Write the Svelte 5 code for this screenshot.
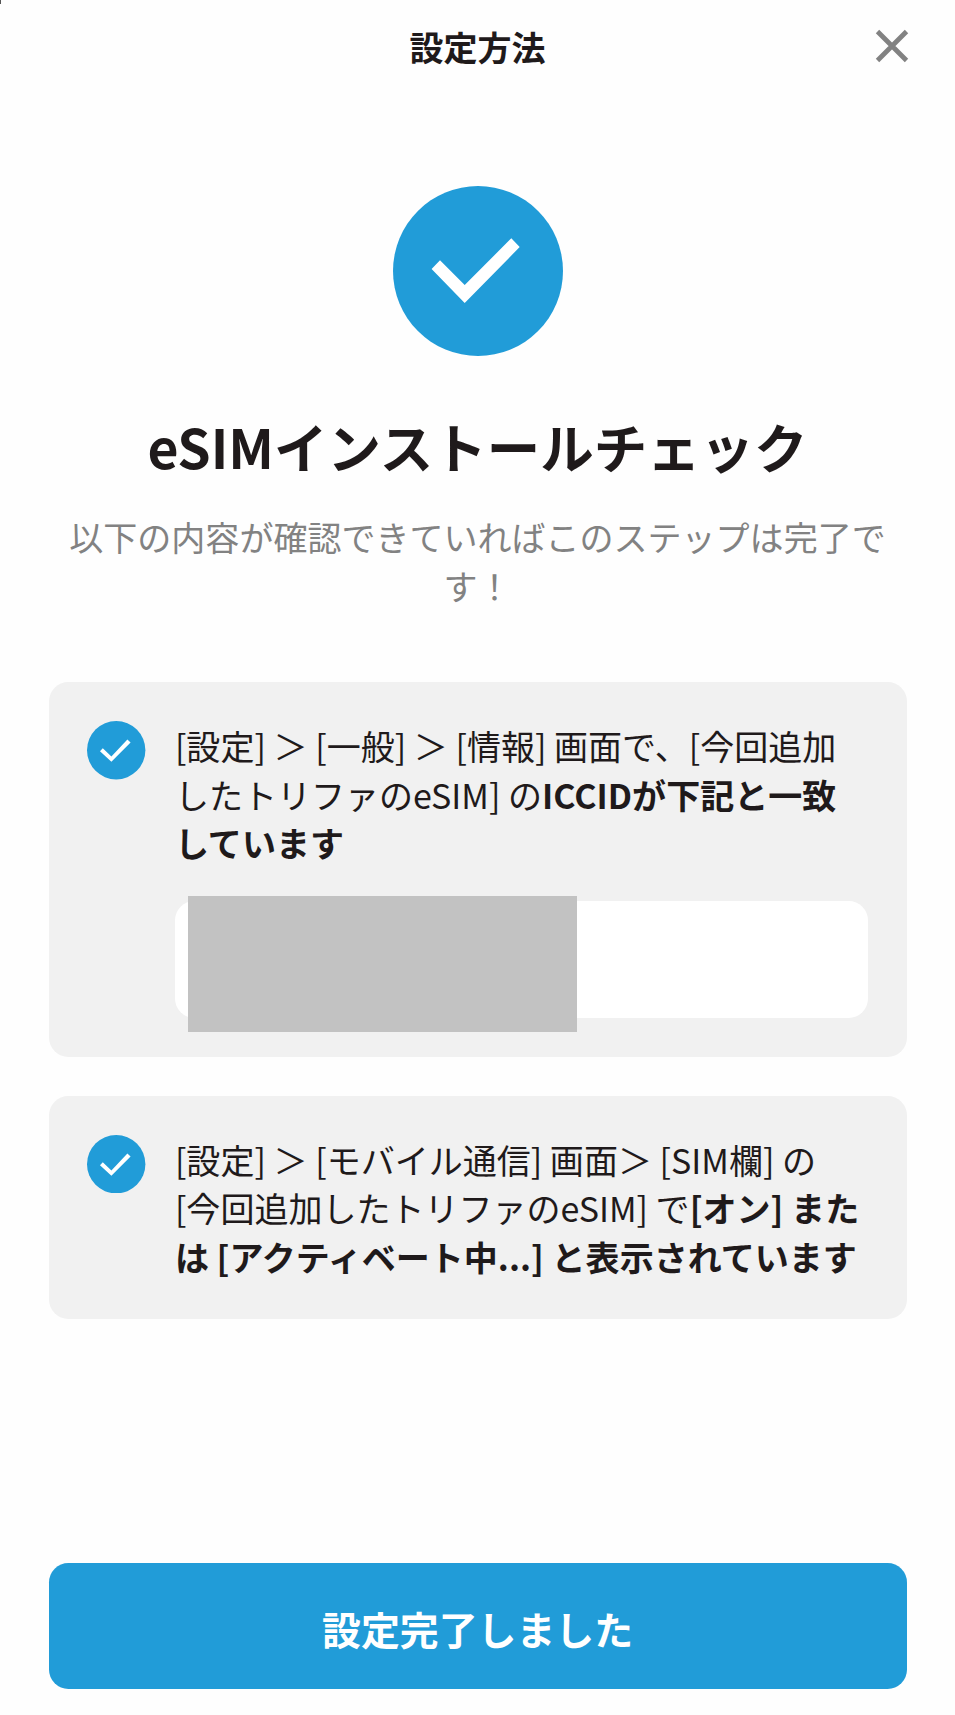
<script>
  const title = '設定方法';
  const heading = 'eSIMインストールチェック';
</script>

{#snippet check()}
  <svg class="check" viewBox="0 0 58.4 58.4" aria-hidden="true">
    <circle cx="29.2" cy="29.2" r="29.2" />
    <path d="M13 30.3 15.8 27.2 24.4 35.5 40.4 18.4 43.6 21.4 24.4 40.8z" />
  </svg>
{/snippet}

<div class="screen">
  <header>
    <h2>{title}</h2>
    <button class="close" type="button" aria-label="閉じる">
      <svg viewBox="0 0 34 34" aria-hidden="true">
        <path d="M2.5 2.5 31.5 31.5M31.5 2.5 2.5 31.5" />
      </svg>
    </button>
  </header>

  <main>
    <svg class="hero" viewBox="0 0 170 170" aria-hidden="true">
      <circle cx="85" cy="85" r="85" />
      <path d="M38.6 83 47 74.3 71.7 99 118.3 52.3 126.7 61 71.7 117z" />
    </svg>

    <h1>{heading}</h1>
    <p class="lead">以下の内容が確認できていればこのステップは完了で<br />す！</p>

    <ul>
      <li>
        {@render check()}
        <div class="body">
          <p>
            [設定] ＞ [一般] ＞ [情報] 画面で、[今回追加<br />したトリファのeSIM] の<strong>ICCIDが下記と一致<br />しています</strong>
          </p>
          <div class="iccid"><span class="mask"></span></div>
        </div>
      </li>
      <li>
        {@render check()}
        <div class="body">
          <p>
            [設定] ＞ [モバイル通信] 画面＞ [SIM欄] の<br />[今回追加したトリファのeSIM] で<strong>[オン] また<br />は [アクティベート中...] と表示されています</strong>
          </p>
        </div>
      </li>
    </ul>
  </main>

  <footer>
    <button class="done" type="button">設定完了しました</button>
  </footer>
</div>

<style>
  :global(body) {
    background: #fefefe;
  }

  .screen {
    position: relative;
    box-sizing: border-box;
    width: 955px;
    height: 1715px;
    padding: 0 48.6px 26px;
    display: flex;
    flex-direction: column;
    overflow: hidden;
    background: #fefefe;
    color: #1f1a1b;
    font-family: "Noto Sans CJK JP", "Noto Sans", sans-serif;
    font-size: 34.03px;
    line-height: 48.6px;
  }

  /* sliver of the rounded sheet corner */
  .screen::before {
    content: '';
    position: absolute;
    top: 0;
    left: 0;
    width: 1px;
    height: 4px;
    background: #555;
  }

  h1, h2, p, ul {
    margin: 0;
    padding: 0;
  }

  button {
    border: 0;
    padding: 0;
    font-family: inherit;
  }

  strong {
    font-weight: 700;
  }

  header {
    display: grid;
    grid-template-columns: 34px 1fr 34px;
    align-items: center;
    height: 91px;
    flex: none;
  }

  h2 {
    grid-column: 2;
    padding-top: 3px;
    text-align: center;
    font-size: 34.03px;
    font-weight: 700;
  }

  .close {
    width: 34px;
    height: 34px;
    margin-left: 3px;
    background: none;
  }

  .close svg {
    display: block;
    fill: none;
    stroke: #828282;
    stroke-width: 4.8;
  }

  main {
    display: flex;
    flex-direction: column;
    align-items: center;
    padding-top: 95.3px;
  }

  .hero {
    width: 170px;
    height: 170px;
    flex: none;
  }

  circle {
    fill: #219cd8;
  }

  circle + path {
    fill: #fff;
  }

  h1 {
    margin-top: 49.7px;
    font-size: 53.47px;
    line-height: 80px;
    font-weight: 700;
    white-space: nowrap;
  }

  .lead {
    margin-top: 27px;
    color: #828282;
    text-align: center;
    white-space: nowrap;
  }

  ul {
    width: 858px;
    margin-top: 72.1px;
    display: flex;
    flex-direction: column;
    gap: 39px;
    list-style: none;
  }

  li {
    display: flex;
    gap: 29.1px;
    padding: 38.9px;
    border-radius: 19.4px;
    background: #f1f1f1;
  }

  .check {
    width: 58.4px;
    height: 58.4px;
    flex: none;
  }

  .body {
    flex: 1;
    min-width: 0;
  }

  .body p {
    padding-top: 1px;
    margin-bottom: -1px;
    white-space: nowrap;
  }

  .iccid {
    position: relative;
    height: 117px;
    margin-top: 34px;
    border-radius: 19.4px;
    background: #fff;
  }

  .mask {
    position: absolute;
    top: -5px;
    left: 13px;
    width: 389px;
    height: 136px;
    background: #c2c2c2;
  }

  footer {
    margin-top: auto;
  }

  .done {
    display: block;
    width: 858px;
    height: 126px;
    padding-top: 3px;
    border-radius: 19.4px;
    background: #219cd8;
    color: #fff;
    font-size: 38.9px;
    font-weight: 700;
  }
</style>
